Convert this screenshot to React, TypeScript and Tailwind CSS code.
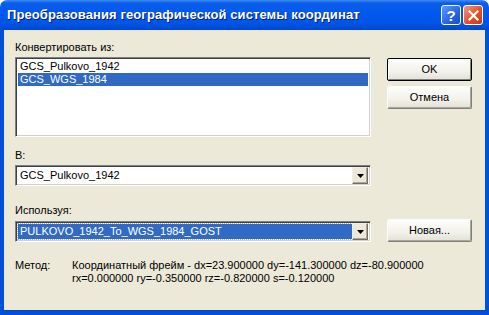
const font = "font-['Liberation_Sans',Arial,sans-serif]";

function XpButton({ label, isDefault = false }: { label: string; isDefault?: boolean }) {
  return (
    <div
      className={`w-[85px] h-[23px] flex items-center justify-center text-[11px] text-black rounded-[2px] bg-[linear-gradient(to_bottom,#fdfdfb,#f2f1ea_60%,#e3e1d5)] ${
        isDefault
          ? 'border border-black shadow-[inset_1px_1px_0_#fff,inset_-1px_-1px_0_#7f7f7f]'
          : 'border border-[#7f7f7f] border-t-[#fbfbf7] border-l-[#fbfbf7] shadow-[inset_-1px_-1px_0_#aca899]'
      }`}
    >
      {label}
    </div>
  );
}

function DropArrow() {
  return (
    <div className="w-[16px] h-[17px] flex items-center justify-center bg-[#ece9d8] border border-[#716f64] border-t-[#f1efe2] border-l-[#f1efe2] shadow-[inset_-1px_-1px_0_#aca899]">
      <svg width="7" height="4" viewBox="0 0 7 4">
        <path d="M0 0h7L3.5 4z" fill="#000" />
      </svg>
    </div>
  );
}

function Combo({ value, selected = false }: { value: string; selected?: boolean }) {
  return (
    <div className="w-[356px] h-[21px] flex items-center bg-white border border-[#808080] border-r-white border-b-white shadow-[inset_1px_1px_0_#404040,inset_-1px_-1px_0_#d4d0c8] p-[2px]">
      <div
        className={`flex-1 h-full flex items-center px-[2px] text-[11px] ${
          selected ? 'bg-[#316ac5] text-white outline outline-1 outline-dotted outline-[#a0b8e8]' : 'text-black'
        }`}
      >
        {value}
      </div>
      <DropArrow />
    </div>
  );
}

export default function App() {
  return (
    <div className={`w-[489px] h-[315px] flex flex-col ${font} select-none`}>
      {/* Title bar */}
      <div className="h-[30px] flex items-center justify-between pl-[7px] pr-[6px] rounded-t-[7px] bg-[linear-gradient(to_bottom,#3f8cf3_0%,#0b5ee9_10%,#0058ee_45%,#0055e5_80%,#0046cf_100%)]">
        <span className="text-white font-bold text-[13px] tracking-[0.1px] [text-shadow:1px_1px_0_#0a1e6a]">
          Преобразования географической системы координат
        </span>
        <div className="flex gap-[2px]">
          <div className="w-[20px] h-[20px] rounded-[3px] border border-white bg-[linear-gradient(135deg,#5c9cff,#2663de_60%,#1a4fc4)] flex items-center justify-center text-white font-bold text-[15px] leading-none">
            ?
          </div>
          <div className="w-[20px] h-[20px] rounded-[3px] border border-white bg-[linear-gradient(135deg,#f09a80,#e2512b_55%,#c53a14)] flex items-center justify-center">
            <svg width="11" height="11" viewBox="0 0 11 11">
              <path d="M1.5 1.5l8 8M9.5 1.5l-8 8" stroke="#fff" strokeWidth="2.2" strokeLinecap="square" />
            </svg>
          </div>
        </div>
      </div>

      {/* Body with frame */}
      <div className="flex-1 flex flex-col bg-[#ece9d8] border-[4px] border-t-0 border-[#0050dc] shadow-[inset_0_-1px_0_#0841b8]">
        <div className="flex flex-col pl-[11px] pt-[11px] text-[11px] text-black">
          <div className="h-[13px] leading-[13px]">Конвертировать из:</div>
          <div className="flex mt-[3px]">
            <div className="w-[356px] h-[80px] bg-white border border-[#808080] border-r-white border-b-white shadow-[inset_1px_1px_0_#404040,inset_-1px_-1px_0_#d4d0c8] p-[2px]">
              <div className="h-[13px] leading-[13px] px-[2px] mt-[-0px]">GCS_Pulkovo_1942</div>
              <div className="h-[13px] leading-[13px] px-[2px] bg-[#316ac5] text-white">GCS_WGS_1984</div>
            </div>
            <div className="flex flex-col gap-[5px] ml-[16px] mt-[1px]">
              <XpButton label="OK" isDefault />
              <XpButton label="Отмена" />
            </div>
          </div>

          <div className="h-[13px] leading-[13px] mt-[12px]">В:</div>
          <div className="mt-[3px]">
            <Combo value="GCS_Pulkovo_1942" />
          </div>

          <div className="h-[13px] leading-[13px] mt-[18px]">Используя:</div>
          <div className="flex items-end mt-[2px]">
            <Combo value="PULKOVO_1942_To_WGS_1984_GOST" selected />
            <div className="ml-[16px] mb-[0px]">
              <XpButton label="Новая..." />
            </div>
          </div>

          <div className="flex mt-[17px]">
            <div className="w-[57px] leading-[13px]">Метод:</div>
            <div className="leading-[13px]">
              <div>Координатный фрейм - dx=23.900000 dy=-141.300000 dz=-80.900000</div>
              <div>rx=0.000000 ry=-0.350000 rz=-0.820000 s=-0.120000</div>
            </div>
          </div>
        </div>
      </div>
    </div>
  );
}
